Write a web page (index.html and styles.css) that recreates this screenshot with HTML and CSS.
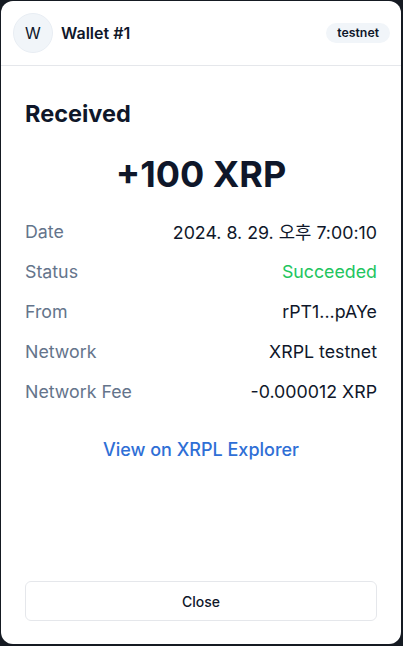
FILE: index.html
```html
<!DOCTYPE html>
<html lang="ko">
<head>
<meta charset="utf-8">
<title>Transaction</title>
<link rel="stylesheet" href="styles.css">
</head>
<body>
<div class="card">
  <header class="header">
    <div class="avatar">W</div>
    <div class="wallet-name">Wallet #1</div>
    <div class="badge">testnet</div>
  </header>
  <main class="content">
    <h1 class="title">Received</h1>
    <div class="amount">+100 XRP</div>
    <div class="rows">
      <div class="row"><span class="label">Date</span><span class="value">2024. 8. 29. 오후 7:00:10</span></div>
      <div class="row"><span class="label">Status</span><span class="value success">Succeeded</span></div>
      <div class="row"><span class="label">From</span><span class="value">rPT1...pAYe</span></div>
      <div class="row"><span class="label">Network</span><span class="value">XRPL testnet</span></div>
      <div class="row"><span class="label">Network Fee</span><span class="value">-0.000012 XRP</span></div>
    </div>
    <a class="explorer" href="#">View on XRPL Explorer</a>
  </main>
  <footer class="footer">
    <button class="close-btn">Close</button>
  </footer>
</div>
</body>
</html>
```

FILE: styles.css
```css
* { box-sizing: border-box; }
html, body { margin: 0; height: 100%; }
body {
  background: #151a22;
  padding: 1px 2px 2px 1px;
  font-family: Inter, "Noto Sans CJK KR", sans-serif;
  color: #0f172a;
}
.card {
  background: #ffffff;
  height: 643px;
  border-radius: 12px;
  display: flex;
  flex-direction: column;
  overflow: hidden;
}
.header {
  height: 65px;
  border-bottom: 1px solid #e5e7eb;
  display: flex;
  align-items: center;
  padding: 0 11px 0 12px;
}
.avatar {
  width: 40px;
  height: 40px;
  border-radius: 50%;
  background: #f1f5f9;
  border: 1px solid #e8edf3;
  display: flex;
  align-items: center;
  justify-content: center;
  font-size: 16px;
  color: #0f172a;
}
.wallet-name {
  margin-left: 8px;
  font-size: 16px;
  font-weight: 600;
  flex: 1;
}
.badge {
  background: #f1f5f9;
  border-radius: 999px;
  padding: 2px 11px;
  font-size: 12.3px;
  font-weight: 600;
  line-height: 16px;
}
.content {
  padding: 34px 24px 0 24px;
  display: flex;
  flex-direction: column;
}
.title {
  margin: 0;
  font-size: 23.5px;
  line-height: 28px;
  font-weight: 700;
}
.amount {
  margin-top: 26px;
  text-align: center;
  font-size: 36px;
  line-height: 40px;
  font-weight: 700;
}
.rows {
  margin-top: 17px;
  display: flex;
  flex-direction: column;
}
.row {
  height: 40px;
  display: flex;
  align-items: center;
  justify-content: space-between;
  font-size: 17.8px;
}
.label { color: #64748b; }
.value { color: #0f172a; }
.success { color: #22c55e; }
.explorer {
  margin-top: 27px;
  align-self: center;
  color: #2f6fd6;
  text-decoration: none;
  font-size: 18px;
  font-weight: 500;
  line-height: 24px;
}
.footer {
  margin-top: auto;
  padding: 0 24px 23px 24px;
}
.close-btn {
  width: 100%;
  height: 40px;
  background: #ffffff;
  border: 1px solid #e5e7eb;
  border-radius: 6px;
  font-family: Inter, sans-serif;
  font-size: 14px;
  font-weight: 500;
  color: #0f172a;
}
```
